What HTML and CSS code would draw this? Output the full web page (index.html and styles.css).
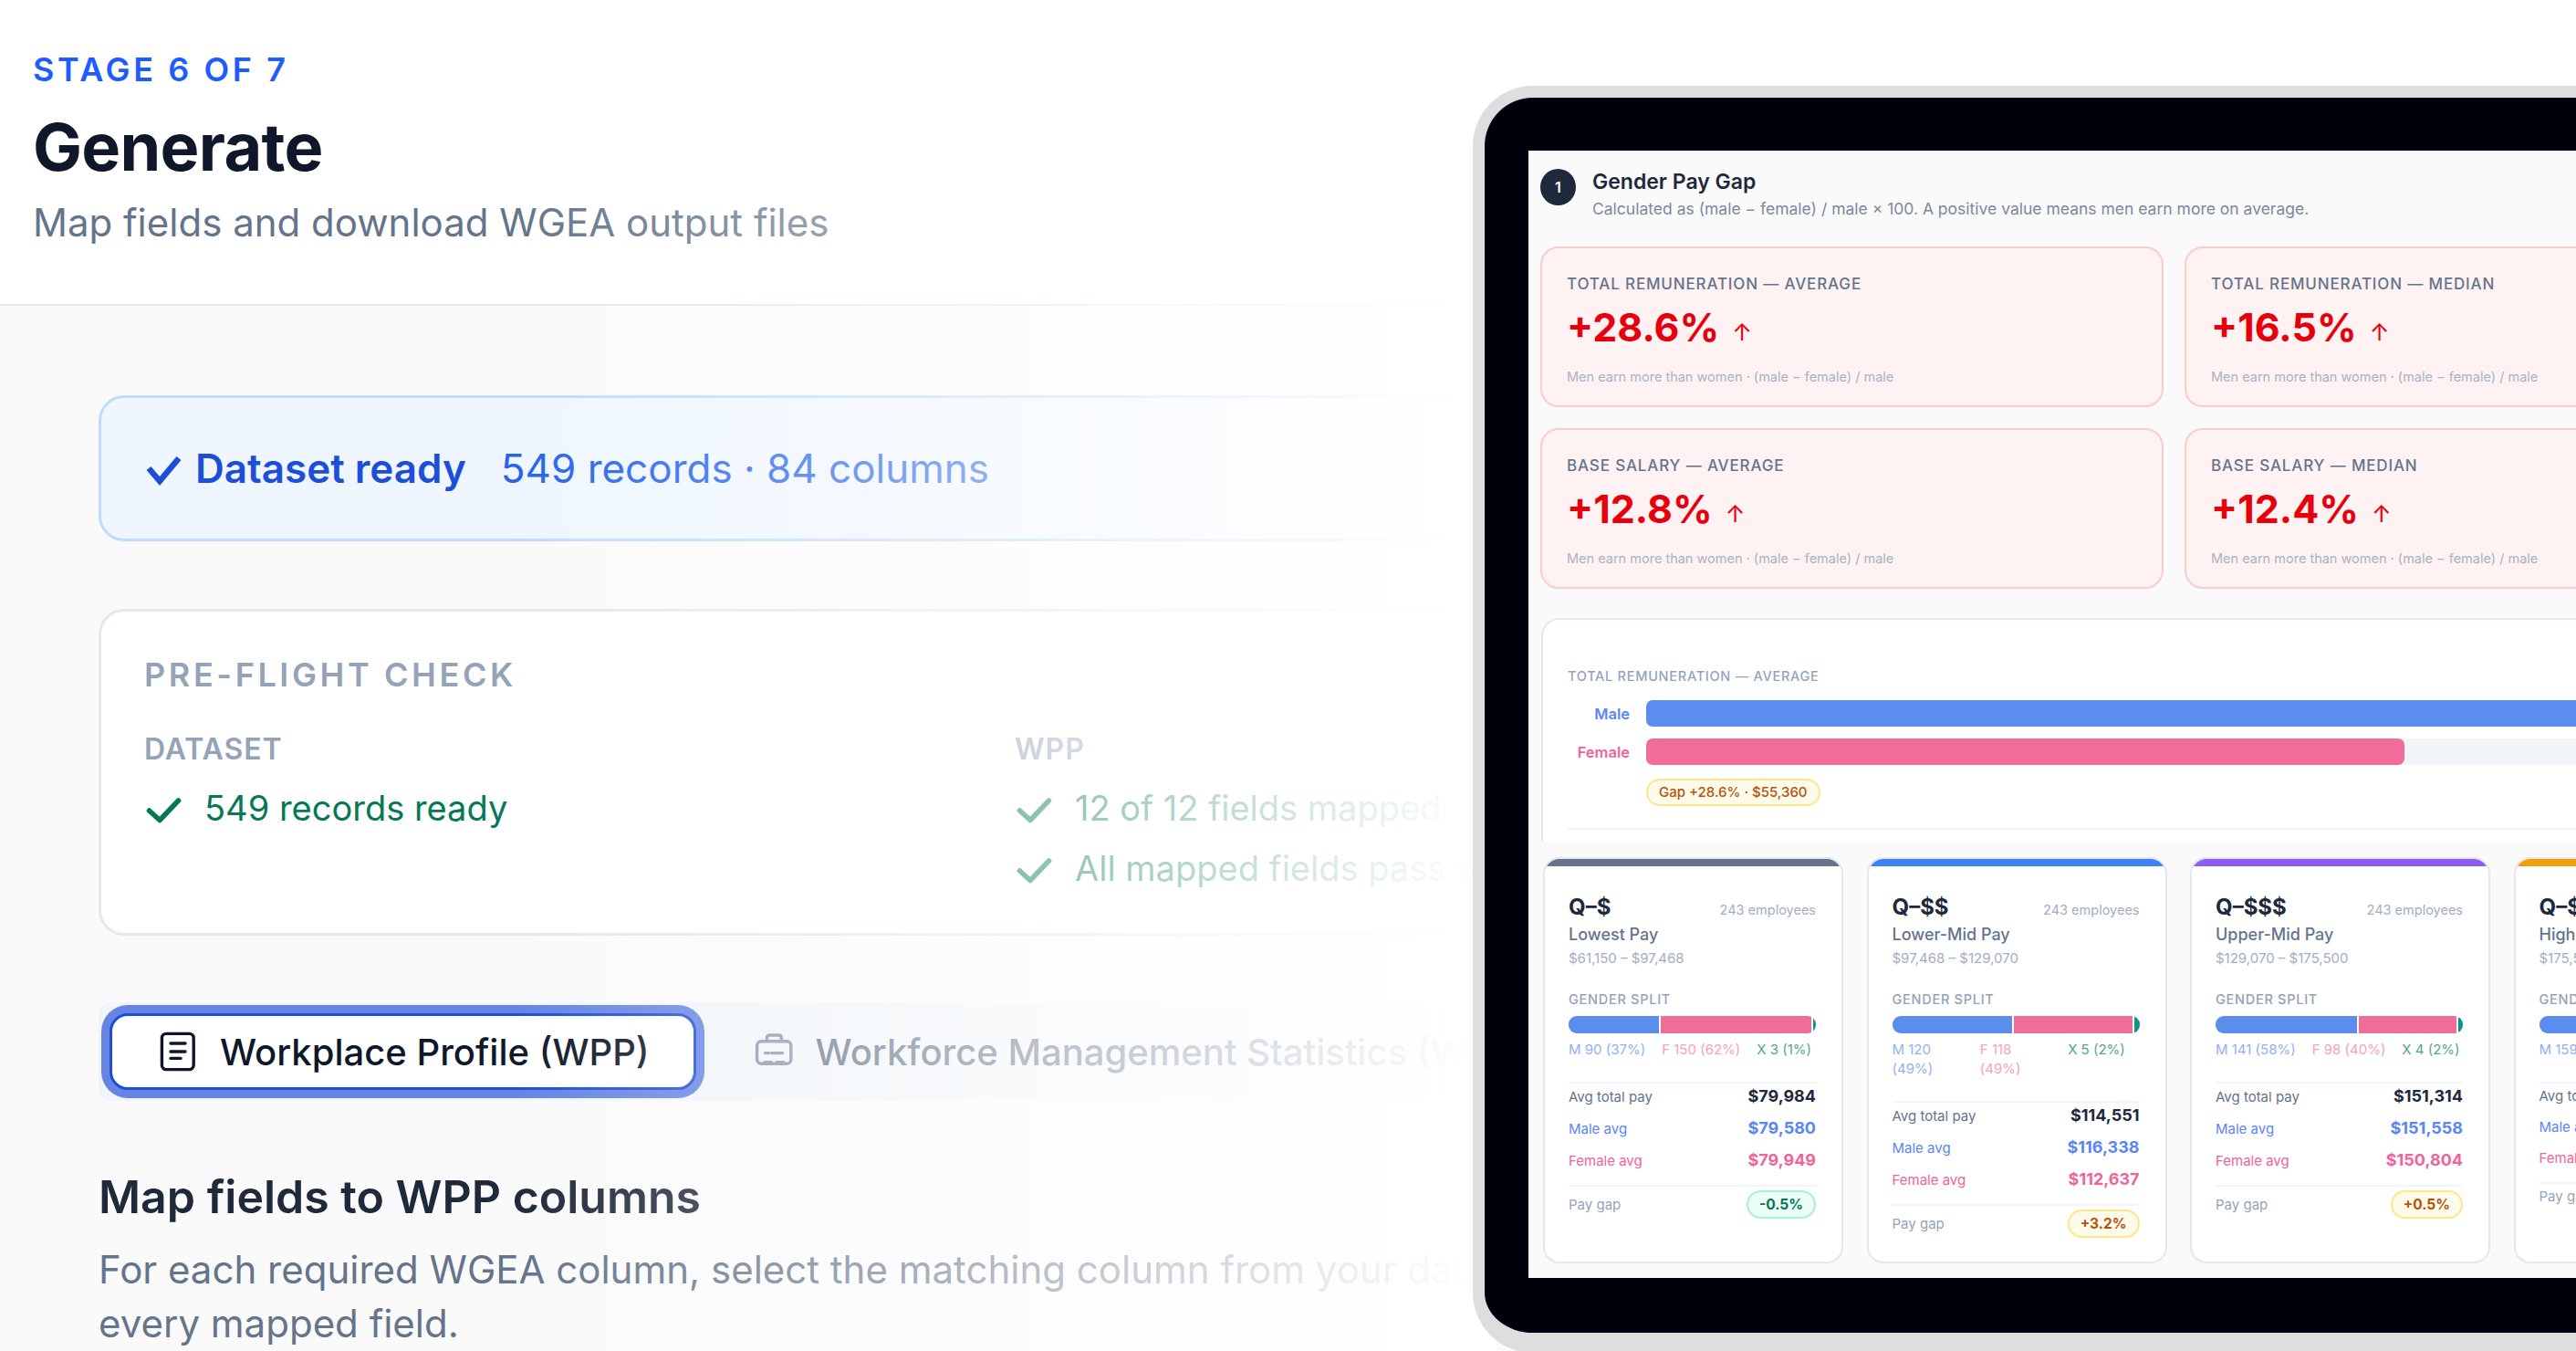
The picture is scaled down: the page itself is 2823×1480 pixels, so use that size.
FILE: index.html
```html
<!DOCTYPE html>
<html lang="en">
    <head>
        <meta charset="UTF-8">
        <meta name="viewport" content="width=device-width, initial-scale=1.0">
        <title>Generate</title>
        <link rel="stylesheet" href="styles.css">
    </head>
    <body>
        <header class="top">
            <div class="stage">STAGE 6 OF 7</div>
            <h1>Generate</h1>
            <p class="lead">Map fields and download WGEA output files</p>
        </header>

        <main class="main">
            <div class="ready">
                <svg class="check check-blue" viewBox="0 0 44 44"><path d="M5 22 17 36 38 11"/></svg>
                <span class="ready-title">Dataset ready</span>
                <span class="ready-info">549 records · 84 columns</span>
            </div>

            <section class="preflight">
                <h2>PRE-FLIGHT CHECK</h2>
                <div class="pf-cols">
                    <div>
                        <h3>DATASET</h3>
                        <div class="pf-item">
                            <svg class="check" viewBox="0 0 44 44"><path d="M5.5 25 17 35.5 37.5 14"/></svg>
                            <span>549 records ready</span>
                        </div>
                    </div>
                    <div>
                        <h3>WPP</h3>
                        <div class="pf-item">
                            <svg class="check" viewBox="0 0 44 44"><path d="M5.5 25 17 35.5 37.5 14"/></svg>
                            <span>12 of 12 fields mapped</span>
                        </div>
                        <div class="pf-item">
                            <svg class="check" viewBox="0 0 44 44"><path d="M5.5 25 17 35.5 37.5 14"/></svg>
                            <span>All mapped fields pass validation</span>
                        </div>
                    </div>
                </div>
            </section>

            <div class="tabs">
                <button class="tab tab-on">
                    <svg class="tab-icon" viewBox="0 0 24 24">
                        <rect x="3.2" y="2.2" width="17.4" height="19.6" rx="2.4"/>
                        <path d="M8 7.5h8M8 12h8M8 15.7h5.5"/>
                    </svg>
                    Workplace Profile (WPP)
                </button>
                <button class="tab">
                    <svg class="tab-icon" viewBox="0 0 24 24">
                        <rect x="2.8" y="6.4" width="18.6" height="12.2" rx="2.2"/>
                        <path d="M8.2 6.2V4.6c0-1 .7-1.6 1.6-1.6h4.8c.9 0 1.6.6 1.6 1.6v1.6"/>
                        <path d="M7.2 12.8h2M10.8 12.8h6"/>
                        <path d="M7 17.8h3.6M13.6 17.8h3.8"/>
                    </svg>
                    Workforce Management Statistics (WMS)
                </button>
            </div>

            <h2 class="map-title">Map fields to WPP columns</h2>
            <p class="map-text">For each required WGEA column, select the matching column from your dataset, then confirm every mapped field.</p>
        </main>

        <!-- white wash between the page and the device -->
        <div class="fade"></div>

        <div class="device">
            <div class="screen">
                <div class="sec-head">
                    <div class="badge">1</div>
                    <div>
                        <div class="sec-title">Gender Pay Gap</div>
                        <div class="sec-sub">Calculated as (male − female) / male × 100. A positive value means men earn more on average.</div>
                    </div>
                </div>

                <div class="stats">
                    <div class="stat">
                        <div class="stat-label">TOTAL REMUNERATION — AVERAGE</div>
                        <div class="stat-value">+28.6% <span class="arrow">↑</span></div>
                        <div class="stat-note">Men earn more than women · (male − female) / male</div>
                    </div>
                    <div class="stat">
                        <div class="stat-label">TOTAL REMUNERATION — MEDIAN</div>
                        <div class="stat-value">+16.5% <span class="arrow">↑</span></div>
                        <div class="stat-note">Men earn more than women · (male − female) / male</div>
                    </div>
                    <div class="stat">
                        <div class="stat-label">BASE SALARY — AVERAGE</div>
                        <div class="stat-value">+12.8% <span class="arrow">↑</span></div>
                        <div class="stat-note">Men earn more than women · (male − female) / male</div>
                    </div>
                    <div class="stat">
                        <div class="stat-label">BASE SALARY — MEDIAN</div>
                        <div class="stat-value">+12.4% <span class="arrow">↑</span></div>
                        <div class="stat-note">Men earn more than women · (male − female) / male</div>
                    </div>
                </div>

                <div class="chart-clip">
                    <div class="chart">
                        <div class="chart-label">TOTAL REMUNERATION — AVERAGE</div>
                        <div class="bar-row">
                            <span class="bar-name male">Male</span>
                            <div class="bar-track"><div class="bar-fill bg-male" style="width: 100%"></div></div>
                        </div>
                        <div class="bar-row">
                            <span class="bar-name female">Female</span>
                            <div class="bar-track"><div class="bar-fill bg-female" style="width: 66.1%"></div></div>
                        </div>
                        <div class="gap-pill">Gap +28.6% · $55,360</div>
                        <div class="chart-rule"></div>
                    </div>
                </div>

                <div class="quarts">
                    <div class="quart">
                        <div class="q-top" style="background: #64748b"></div>
                        <div class="q-body">
                            <div class="q-head"><span class="q-name">Q–$</span><span class="q-count">243 employees</span></div>
                            <div class="q-desc">Lowest Pay</div>
                            <div class="q-range">$61,150 – $97,468</div>
                            <div class="q-split">GENDER SPLIT</div>
                            <div class="split">
                                <div class="bg-male" style="width: 37%"></div>
                                <div class="bg-female" style="width: 62%"></div>
                                <div class="bg-x" style="width: 1%"></div>
                            </div>
                            <div class="legend"><span class="l-m">M 90 (37%)</span><span class="l-f">F 150 (62%)</span><span class="l-x">X 3 (1%)</span></div>
                            <div class="q-rows">
                                <div class="q-row"><span class="k">Avg total pay</span><b class="v">$79,984</b></div>
                                <div class="q-row male"><span>Male avg</span><b>$79,580</b></div>
                                <div class="q-row female"><span>Female avg</span><b>$79,949</b></div>
                            </div>
                            <div class="q-gap"><span>Pay gap</span><b class="pill pill-green">-0.5%</b></div>
                        </div>
                    </div>

                    <div class="quart">
                        <div class="q-top" style="background: #3b82f6"></div>
                        <div class="q-body">
                            <div class="q-head"><span class="q-name">Q–$$</span><span class="q-count">243 employees</span></div>
                            <div class="q-desc">Lower-Mid Pay</div>
                            <div class="q-range">$97,468 – $129,070</div>
                            <div class="q-split">GENDER SPLIT</div>
                            <div class="split">
                                <div class="bg-male" style="width: 49.4%"></div>
                                <div class="bg-female" style="width: 48.6%"></div>
                                <div class="bg-x" style="width: 2%"></div>
                            </div>
                            <div class="legend legend-wrap"><span class="l-m">M 120 (49%)</span><span class="l-f">F 118 (49%)</span><span class="l-x">X 5 (2%)</span></div>
                            <div class="q-rows">
                                <div class="q-row"><span class="k">Avg total pay</span><b class="v">$114,551</b></div>
                                <div class="q-row male"><span>Male avg</span><b>$116,338</b></div>
                                <div class="q-row female"><span>Female avg</span><b>$112,637</b></div>
                            </div>
                            <div class="q-gap"><span>Pay gap</span><b class="pill pill-amber">+3.2%</b></div>
                        </div>
                    </div>

                    <div class="quart">
                        <div class="q-top" style="background: #8b5cf6"></div>
                        <div class="q-body">
                            <div class="q-head"><span class="q-name">Q–$$$</span><span class="q-count">243 employees</span></div>
                            <div class="q-desc">Upper-Mid Pay</div>
                            <div class="q-range">$129,070 – $175,500</div>
                            <div class="q-split">GENDER SPLIT</div>
                            <div class="split">
                                <div class="bg-male" style="width: 58%"></div>
                                <div class="bg-female" style="width: 40%"></div>
                                <div class="bg-x" style="width: 2%"></div>
                            </div>
                            <div class="legend"><span class="l-m">M 141 (58%)</span><span class="l-f">F 98 (40%)</span><span class="l-x">X 4 (2%)</span></div>
                            <div class="q-rows">
                                <div class="q-row"><span class="k">Avg total pay</span><b class="v">$151,314</b></div>
                                <div class="q-row male"><span>Male avg</span><b>$151,558</b></div>
                                <div class="q-row female"><span>Female avg</span><b>$150,804</b></div>
                            </div>
                            <div class="q-gap"><span>Pay gap</span><b class="pill pill-amber">+0.5%</b></div>
                        </div>
                    </div>

                    <div class="quart">
                        <div class="q-top" style="background: #f59e0b"></div>
                        <div class="q-body">
                            <div class="q-head"><span class="q-name">Q–$$$$</span></div>
                            <div class="q-desc">Highest Pay</div>
                            <div class="q-range">$175,500 – $310,000</div>
                            <div class="q-split">GENDER SPLIT</div>
                            <div class="split">
                                <div class="bg-male" style="width: 65%"></div>
                                <div class="bg-female" style="width: 33%"></div>
                                <div class="bg-x" style="width: 2%"></div>
                            </div>
                            <div class="legend"><span class="l-m">M 159 (65%)</span></div>
                            <div class="q-rows">
                                <div class="q-row"><span class="k">Avg total pay</span></div>
                                <div class="q-row male"><span>Male avg</span></div>
                                <div class="q-row female"><span>Female avg</span></div>
                            </div>
                            <div class="q-gap"><span>Pay gap</span></div>
                        </div>
                    </div>
                </div>
            </div>
        </div>
    </body>
</html>
```

FILE: styles.css
```css
* {
    box-sizing: border-box;
}
html, body {
    margin: 0;
    height: 100%;
    overflow: hidden;
}
body {
    position: relative;
    background: #fafafa;
    font-family: Inter, "Liberation Sans", sans-serif;
    color: #0f172a;
}
h1, h2, h3, p {
    margin: 0;
}

/* #region Header */
.top {
    background: #fff;
    padding: 54px 36px 61px;
    height: 335px;
    border-bottom: 2px solid #e2e8f0;
}
.stage {
    font-size: 36px;
    line-height: 44px;
    font-weight: 600;
    letter-spacing: 0.1em;
    color: #1d5cff;
}
h1 {
    margin-top: 23px;
    font-size: 72px;
    line-height: 80px;
    font-weight: 700;
    letter-spacing: -0.01em;
}
.lead {
    margin-top: 15px;
    font-size: 42px;
    line-height: 56px;
    color: #64748b;
}
/* #endregion Header */

/* #region Left page */
.main {
    width: 2068px;
    padding: 98px 0 0 108px;
}
.ready {
    display: flex;
    align-items: center;
    height: 160px;
    padding: 0 47px;
    background: #eff6ff;
    border: 3px solid #bfdbfe;
    border-radius: 28px;
    font-size: 44px;
}
.ready-title {
    margin-left: 12px;
    font-weight: 600;
    color: #1d4ed8;
}
.ready-info {
    margin-left: 38px;
    color: #2563eb;
}
.check {
    flex: none;
    width: 44px;
    height: 44px;
    fill: none;
    stroke: #047857;
    stroke-width: 5.5;
    stroke-linecap: round;
    stroke-linejoin: round;
}
.check-blue {
    stroke: #1d4ed8;
    stroke-width: 6.5;
    stroke-linecap: butt;
    stroke-linejoin: miter;
}
.preflight {
    margin-top: 74px;
    padding: 47px 47px 46px;
    background: #fff;
    border: 3px solid #e2e8f0;
    border-radius: 28px;
}
.preflight h2 {
    font-size: 36px;
    line-height: 44px;
    font-weight: 600;
    letter-spacing: 0.1em;
    color: #94a3b8;
}
.pf-cols {
    display: grid;
    grid-template-columns: repeat(2, 1fr);
    gap: 48px;
    margin-top: 40px;
}
.pf-cols h3 {
    font-size: 32px;
    line-height: 40px;
    font-weight: 600;
    letter-spacing: 0.03em;
    color: #94a3b8;
}
.pf-item {
    display: flex;
    align-items: center;
    gap: 22px;
    margin-top: 16px;
    font-size: 38px;
    line-height: 50px;
    color: #047857;
}
.pf-cols h3 + .pf-item {
    margin-top: 19px;
}
.tabs {
    display: inline-flex;
    gap: 10px;
    margin-top: 73px;
    padding: 12px;
    background: #f1f5f9;
    border-radius: 14px;
    vertical-align: top;
}
.tab {
    display: flex;
    align-items: center;
    gap: 22px;
    height: 84px;
    padding: 0 48px;
    border: 3px solid transparent;
    border-radius: 20px;
    background: transparent;
    font-family: inherit;
    font-size: 40px;
    font-weight: 500;
    color: #64748b;
    white-space: nowrap;
}
.tab-on {
    background: #fff;
    border-color: #1d4ed8;
    box-shadow: 0 0 0 9px rgba(37, 78, 219, 0.68);
    color: #0f172a;
}
.tab-icon {
    flex: none;
    width: 48px;
    height: 48px;
    fill: none;
    stroke: #8794aa;
    stroke-width: 1.7;
    stroke-linecap: round;
    stroke-linejoin: round;
}
.tab-on .tab-icon {
    stroke: #0f172a;
}
.map-title {
    margin-top: 75px;
    font-size: 50px;
    line-height: 60px;
    font-weight: 600;
    color: #1e293b;
}
.map-text {
    margin-top: 20px;
    font-size: 42px;
    line-height: 59px;
    color: #64748b;
}
.fade {
    position: absolute;
    top: 0;
    left: 0;
    width: 1640px;
    height: 100%;
    background: linear-gradient(90deg, rgba(255, 255, 255, 0) 560px, #fff 1610px);
}
/* #endregion Left page */

/* #region Device */
.device {
    position: absolute;
    left: 1614px;
    top: 94px;
    width: 1500px;
    height: 1388px;
    padding: 58px 0 59px 48px;
    background: #00000d;
    border: 13px solid #dedede;
    border-bottom-width: 22px;
    border-radius: 66px;
}
.screen {
    width: 1415px;
    height: 1235px;
    padding-top: 20px;
    background: #fafafa;
    overflow: hidden;
}
.sec-head {
    display: flex;
    gap: 18px;
    padding-left: 13px;
}
.badge {
    flex: none;
    display: flex;
    align-items: center;
    justify-content: center;
    width: 39px;
    height: 40px;
    border-radius: 50%;
    background: #1e293b;
    color: #fff;
    font-size: 16px;
    font-weight: 600;
}
.sec-title {
    margin-top: -1px;
    font-size: 23px;
    line-height: 30px;
    font-weight: 600;
    color: #1e293b;
}
.sec-sub {
    margin-top: 3px;
    font-size: 17.5px;
    line-height: 24px;
    color: #7b899f;
}
.stats {
    display: grid;
    grid-template-columns: repeat(2, 683px);
    gap: 23px;
    margin: 29px 0 0 13px;
}
.stat {
    height: 176px;
    padding: 28px 27px;
    background: #fef2f2;
    border: 2px solid #fecaca;
    border-radius: 20px;
}
.stat-label {
    font-size: 17px;
    line-height: 22px;
    font-weight: 500;
    letter-spacing: 0.05em;
    color: #64748b;
}
.stat-value {
    margin-top: 11px;
    font-size: 43px;
    line-height: 50px;
    font-weight: 700;
    color: #e7000b;
}
.arrow {
    font-size: 26px;
    font-weight: 400;
    margin-left: 4px;
    vertical-align: 1px;
}
.stat-note {
    margin-top: 14px;
    font-size: 14.5px;
    line-height: 20px;
    color: #a8b3c4;
}
.chart-clip {
    height: 245px;
    margin: 32px 0 0 14px;
    overflow: hidden;
}
.chart {
    height: 300px;
    padding: 52px 27px 0;
    background: #fff;
    border: 2px solid #e2e8f0;
    border-radius: 20px;
}
.chart-label {
    font-size: 14.5px;
    line-height: 20px;
    font-weight: 500;
    letter-spacing: 0.05em;
    color: #94a3b8;
}
.bar-row {
    display: flex;
    align-items: center;
    gap: 18px;
    margin-top: 13px;
}
.chart-label + .bar-row {
    margin-top: 16px;
}
.bar-name {
    width: 68px;
    text-align: right;
    font-size: 16.5px;
    font-weight: 600;
}
.bar-track {
    flex: 1;
    height: 29px;
    background: #f1f5f9;
    border-radius: 7px;
}
.bar-fill {
    height: 100%;
    border-radius: 7px;
}
.male {
    color: #5b85f7;
}
.female {
    color: #f0649a;
}
.bg-male {
    background: #5b8def;
}
.bg-female {
    background: #f06c9b;
}
.bg-x {
    background: #0d9488;
}
.gap-pill {
    display: inline-block;
    margin: 15px 0 0 86px;
    padding: 0 12px;
    height: 30px;
    background: #fffbeb;
    border: 2px solid #fde68a;
    border-radius: 15px;
    font-size: 15px;
    line-height: 26px;
    font-weight: 500;
    color: #b45309;
}
.chart-rule {
    margin-top: 24px;
    border-top: 2px solid #f1f5f9;
}
.quarts {
    display: grid;
    grid-template-columns: repeat(4, 329px);
    gap: 25.5px;
    margin: 17px 0 0 16px;
}
.quart {
    height: 445px;
    background: #fff;
    border: 2px solid #e2e8f0;
    border-radius: 18px;
    overflow: hidden;
}
.q-top {
    height: 8px;
}
.q-body {
    padding: 30px 28px 0 26px;
}
.q-head {
    display: flex;
    align-items: baseline;
    justify-content: space-between;
}
.q-name {
    font-size: 24px;
    line-height: 30px;
    font-weight: 700;
    color: #1e293b;
}
.q-count {
    font-size: 14.5px;
    color: #a3aebf;
}
.q-desc {
    margin-top: 3px;
    font-size: 18px;
    line-height: 24px;
    font-weight: 500;
    color: #64748b;
}
.q-range {
    margin-top: 4px;
    font-size: 15px;
    line-height: 20px;
    color: #a3aebf;
}
.q-split {
    margin-top: 25px;
    font-size: 14.5px;
    line-height: 20px;
    font-weight: 500;
    letter-spacing: 0.05em;
    color: #94a3b8;
}
.split {
    display: flex;
    gap: 2px;
    height: 19px;
    margin-top: 8px;
    border-radius: 9px;
    overflow: hidden;
}
.legend {
    display: flex;
    gap: 18px;
    margin-top: 7px;
    font-size: 15px;
    line-height: 21px;
}
.legend-wrap span {
    flex: 1;
}
.l-m {
    color: #8fb0f8;
}
.l-f {
    color: #f7a0bf;
}
.l-x {
    color: #4fa98a;
}
.q-rows {
    display: flex;
    flex-direction: column;
    gap: 8px;
    margin-top: 25px;
    padding-top: 1px;
    border-top: 2px solid #f1f5f9;
    font-size: 15px;
}
.q-row {
    display: flex;
    align-items: baseline;
    justify-content: space-between;
    line-height: 26px;
    white-space: nowrap;
}
.q-row b {
    font-size: 18px;
    font-weight: 700;
}
.k {
    color: #64748b;
}
.v {
    color: #1e293b;
}
.q-gap {
    display: flex;
    align-items: center;
    justify-content: space-between;
    margin-top: 13px;
    padding-top: 4px;
    border-top: 2px solid #f1f5f9;
    font-size: 15px;
    color: #94a3b8;
    white-space: nowrap;
}
.pill {
    height: 31px;
    padding: 0 12px;
    border: 2px solid;
    border-radius: 16px;
    font-size: 15.5px;
    line-height: 27px;
}
.pill-green {
    background: #ecfdf5;
    border-color: #a7f3d0;
    color: #047857;
}
.pill-amber {
    background: #fffbeb;
    border-color: #fde68a;
    color: #b45309;
}
/* #endregion Device */
```
